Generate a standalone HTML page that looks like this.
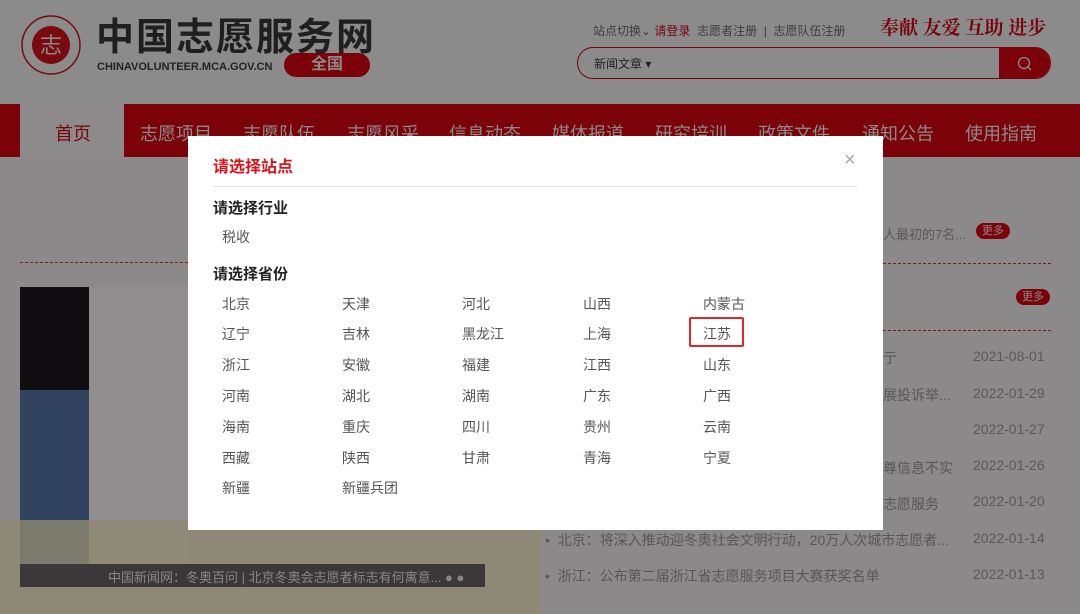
<!DOCTYPE html>
<html><head><meta charset="utf-8"><style>
*{margin:0;padding:0;box-sizing:border-box}
body{width:1080px;height:614px;overflow:hidden;position:relative;background:#8c898b;font-family:"Liberation Sans","Noto Sans CJK SC",sans-serif}
.abs{position:absolute;white-space:nowrap}
.hdr{position:absolute;left:0;top:0;width:1080px;height:104px;background:#8b8b8b}
.nav{position:absolute;left:0;top:104px;width:1080px;height:53px;background:#7a0208}
.nav span{position:absolute;top:16px;font-size:18px;color:#8e8a8a}
.modal{position:absolute;left:188px;top:136px;width:695px;height:394px;background:#fff}
.p{position:absolute;font-size:14px;color:#555}
.g{color:#5a5657;font-size:14px}
.d{color:#5c5859;font-size:14px}
</style></head><body>
<div class="hdr"></div>
<!-- logo -->
<svg class="abs" style="left:20px;top:13px" width="62" height="64" viewBox="0 0 62 64"><circle cx="31" cy="32" r="29" fill="none" stroke="#7a0a0e" stroke-width="1.5"/><circle cx="31" cy="32" r="19" fill="#7a0a0e"/><text x="31" y="40" font-size="22" text-anchor="middle" fill="#8b8b8b" font-family="Noto Sans CJK SC">志</text></svg>
<div class="abs" style="left:96px;top:6px;font-size:38px;font-weight:bold;color:#1f1f1f;letter-spacing:2px;font-family:'Noto Sans CJK SC',sans-serif">中国志愿服务网</div>
<div class="abs" style="left:97px;top:61px;font-size:11px;font-weight:bold;color:#222">CHINAVOLUNTEER.MCA.GOV.CN</div>
<div class="abs" style="left:284px;top:53px;width:86px;height:24px;border-radius:12px;background:#7a0208;color:#8b8b8b;font-size:16px;font-weight:bold;text-align:center;line-height:24px">全国</div>
<div class="abs" style="left:593px;top:22px;font-size:12px;color:#3c3c3c">站点切换⌄ <span style="color:#7a0208">请登录</span>&nbsp; 志愿者注册 &nbsp;|&nbsp; 志愿队伍注册</div>
<div class="abs" style="left:880px;top:13px;font-size:19px;color:#7a0208;font-weight:bold;font-family:'Noto Serif CJK SC',serif">奉献 友爱 互助 进步</div>
<div class="abs" style="left:577px;top:47px;width:474px;height:32px;border:1px solid #7a0208;border-radius:16px;overflow:hidden"><div class="abs" style="left:421px;top:0;width:53px;height:32px;background:#7a0208"></div><div class="abs" style="left:16px;top:7px;font-size:12px;color:#222">新闻文章 ▾</div>
<svg class="abs" style="left:439px;top:8px" width="16" height="16"><circle cx="7" cy="7" r="5.5" fill="none" stroke="#8b8b8b" stroke-width="1.3"/><line x1="11" y1="11" x2="14" y2="14" stroke="#8b8b8b" stroke-width="1.3"/></svg></div>
<div class="nav">
<div class="abs" style="left:20px;top:0;width:104px;height:53px;background:#8c8a8a"></div>
<span style="left:55px;color:#7a0208">首页</span>
<span style="left:140px">志愿项目</span><span style="left:243px">志愿队伍</span><span style="left:347px">志愿风采</span><span style="left:449px">信息动态</span><span style="left:552px">媒体报道</span><span style="left:655px">研究培训</span><span style="left:758px">政策文件</span><span style="left:862px">通知公告</span><span style="left:965px">使用指南</span>
</div>
<!-- left image -->
<div class="abs" style="left:20px;top:287px;width:69px;height:300px;background:#0f0d10"></div>
<div class="abs" style="left:20px;top:390px;width:69px;height:180px;background:#3e5a80;opacity:.7"></div>
<div class="abs" style="left:89px;top:287px;width:99px;height:300px;background:#928d8e"></div>
<div class="abs" style="left:0;top:520px;width:540px;height:94px;background:#8f8a72;opacity:.8"></div>
<div class="abs" style="left:20px;top:564px;width:465px;height:23px;background:#3a3838"></div>
<div class="abs" style="left:108px;top:567px;font-size:13px;color:#8a8686">中国新闻网：冬奥百问 | 北京冬奥会志愿者标志有何寓意... ● ●</div>
<div class="abs" style="left:20px;top:262px;width:168px;border-top:1px dashed #7a1a1e"></div>
<div class="abs" style="left:883px;top:263px;width:168px;border-top:1px dashed #7a1a1e"></div>
<div class="abs" style="left:883px;top:330px;width:168px;border-top:1px dashed #7a1a1e"></div>
<div class="abs g" style="left:883px;top:224px;font-size:13px">人最初的7名...</div>
<div class="abs" style="left:976px;top:223px;width:34px;height:16px;border-radius:8px;background:#7a0208;color:#8b8b8b;font-size:11px;text-align:center;line-height:16px">更多</div>
<div class="abs" style="left:1016px;top:289px;width:34px;height:16px;border-radius:8px;background:#7a0208;color:#8b8b8b;font-size:11px;text-align:center;line-height:16px">更多</div>
<div class="abs g" style="left:883px;top:348px">亍</div>
<div class="abs g" style="left:883px;top:385px">展投诉举...</div>
<div class="abs g" style="left:883px;top:458px">尊信息不实</div>
<div class="abs g" style="left:883px;top:494px">志愿服务</div>
<div class="abs g" style="left:545px;top:530px">•&nbsp; 北京：将深入推动迎冬奥社会文明行动，20万人次城市志愿者...</div>
<div class="abs g" style="left:545px;top:566px">•&nbsp; 浙江：公布第二届浙江省志愿服务项目大赛获奖名单</div>
<div class="abs d" style="left:973px;top:348px">2021-08-01</div>
<div class="abs d" style="left:973px;top:385px">2022-01-29</div>
<div class="abs d" style="left:973px;top:421px">2022-01-27</div>
<div class="abs d" style="left:973px;top:457px">2022-01-26</div>
<div class="abs d" style="left:973px;top:493px">2022-01-20</div>
<div class="abs d" style="left:973px;top:530px">2022-01-14</div>
<div class="abs d" style="left:973px;top:566px">2022-01-13</div>
<!-- modal -->
<div class="modal">
<div class="abs" style="left:25px;top:17px;font-size:16px;font-weight:bold;color:#d8121a">请选择站点</div>
<div class="abs" style="left:656px;top:14px;font-size:20px;color:#aaa;line-height:20px">×</div>
<div class="abs" style="left:25px;top:50px;width:644px;border-top:1px solid #e6e6e6"></div>
<div class="abs" style="left:25px;top:61px;font-size:15px;font-weight:bold;color:#222">请选择行业</div>
<div class="p" style="left:34px;top:91px">税收</div>
<div class="abs" style="left:25px;top:127px;font-size:15px;font-weight:bold;color:#222">请选择省份</div>
<div class="p" style="left:34px;top:158px">北京</div><div class="p" style="left:154px;top:158px">天津</div><div class="p" style="left:274px;top:158px">河北</div><div class="p" style="left:395px;top:158px">山西</div><div class="p" style="left:515px;top:158px">内蒙古</div>
<div class="p" style="left:34px;top:188px">辽宁</div><div class="p" style="left:154px;top:188px">吉林</div><div class="p" style="left:274px;top:188px">黑龙江</div><div class="p" style="left:395px;top:188px">上海</div><div class="p" style="left:515px;top:188px">江苏</div>
<div class="abs" style="left:501px;top:181px;width:55px;height:30px;border:2px solid #e0262b;border-radius:2px"></div>
<div class="p" style="left:34px;top:219px">浙江</div><div class="p" style="left:154px;top:219px">安徽</div><div class="p" style="left:274px;top:219px">福建</div><div class="p" style="left:395px;top:219px">江西</div><div class="p" style="left:515px;top:219px">山东</div>
<div class="p" style="left:34px;top:250px">河南</div><div class="p" style="left:154px;top:250px">湖北</div><div class="p" style="left:274px;top:250px">湖南</div><div class="p" style="left:395px;top:250px">广东</div><div class="p" style="left:515px;top:250px">广西</div>
<div class="p" style="left:34px;top:281px">海南</div><div class="p" style="left:154px;top:281px">重庆</div><div class="p" style="left:274px;top:281px">四川</div><div class="p" style="left:395px;top:281px">贵州</div><div class="p" style="left:515px;top:281px">云南</div>
<div class="p" style="left:34px;top:312px">西藏</div><div class="p" style="left:154px;top:312px">陕西</div><div class="p" style="left:274px;top:312px">甘肃</div><div class="p" style="left:395px;top:312px">青海</div><div class="p" style="left:515px;top:312px">宁夏</div>
<div class="p" style="left:34px;top:342px">新疆</div><div class="p" style="left:154px;top:342px">新疆兵团</div>
</div>
</body></html>
